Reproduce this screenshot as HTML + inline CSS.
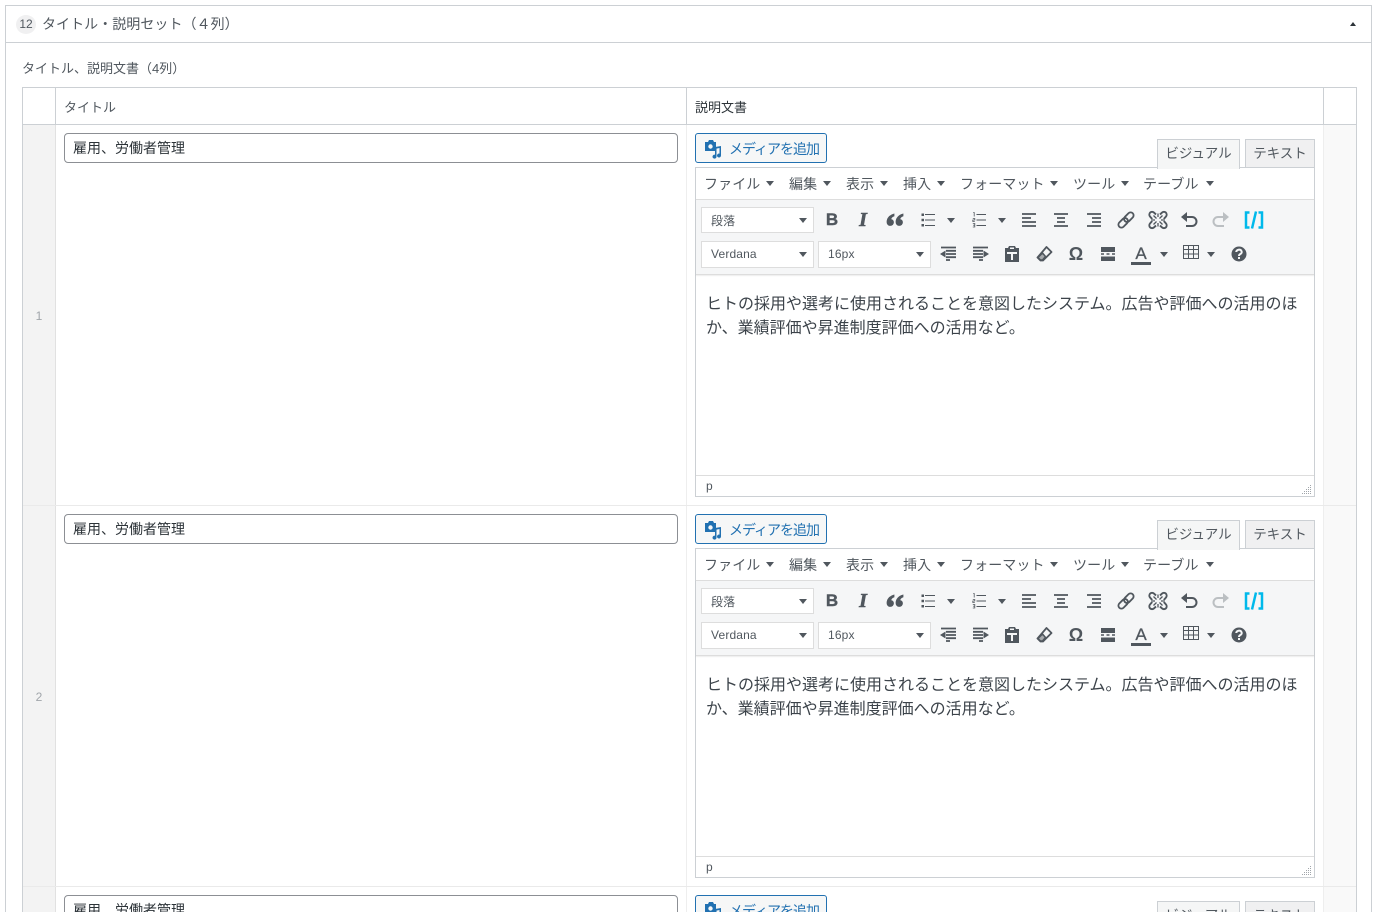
<!DOCTYPE html>
<html lang="ja"><head><meta charset="utf-8"><title>タイトル・説明セット</title>
<style>
html,body{margin:0;padding:0;width:1377px;height:912px;overflow:hidden;background:#fff}
body{font-family:"Liberation Sans","Noto Sans CJK JP",sans-serif;color:#3c434a;font-size:13px;position:relative}
div,span,svg{position:absolute;box-sizing:border-box}
.t{white-space:nowrap;line-height:20px}
.ed{left:0;width:1377px;height:381px}
.in{left:64px;top:133px;width:614px;height:30px;border:1px solid #8c8f94;border-radius:4px;background:#fff;padding-left:8px;font-size:14px;line-height:28px;color:#2c3338;white-space:nowrap}
.btn{left:695px;top:133px;width:132px;height:30px;border:1px solid #2271b1;border-radius:3px;background:#f6f7f7}
.mt{left:729px;top:139px;font-size:14px;letter-spacing:-1px;color:#2271b1}
.tab{top:139px;height:29px;border:1px solid #ccd0d4;font-size:13.500px;line-height:27px;text-align:center;color:#50575e;white-space:nowrap}
.box{left:695px;top:167px;width:620px;height:330px;border:1px solid #ccd0d4;background:#fff}
.m{top:174px;margin-left:-1px;font-size:14px;letter-spacing:.1px;color:#50575e}
.s{width:113px;height:26px;background:#fff;border:1px solid #ddd;font-size:12px;line-height:26px;padding-left:9px;color:#50575e;white-space:nowrap;letter-spacing:.15px}
.s2{height:27px;top:241px;line-height:25px}
.a{width:0;height:0;border-left:4px solid transparent;border-right:4px solid transparent;border-top:5px solid #50575e}
.ma{width:0;height:0;border-left:4px solid transparent;border-right:4px solid transparent;border-top:5px solid #50575e;top:181px}
.i{width:20px;height:20px;overflow:visible}
.g{font-size:16px;text-align:center;width:20px;color:#50575e;line-height:20px;white-space:nowrap}
.b{left:822px;top:210px;font-weight:bold;font-size:17px;-webkit-text-stroke:.4px #50575e}
.it{left:853px;top:210px;font-family:"Liberation Serif",serif;font-style:italic;font-weight:bold;font-size:20px;-webkit-text-stroke:.6px #50575e}
.om{left:1066px;top:244px;font-size:18px;font-weight:bold}
.ta{left:1131px;top:244px;font-size:17px;-webkit-text-stroke:.3px #50575e}
.c{left:706px;margin-top:2px;font-size:16px;line-height:24px;color:#3c434a;white-space:nowrap}
</style></head><body>
<svg width="0" height="0" style="left:0;top:0">
<defs>
<symbol id="media" viewBox="0 0 20 20"><path fill="#2271b1" d="M2 3h3l1-2h4l1 2h2v9H2z"/><circle cx="7.500" cy="7.500" r="2.200" fill="#f6f7f7"/><path fill="#2271b1" d="M18 7v9.500a2 2 0 1 1-1.500-1.900V9l-3 .6v8a2 2 0 1 1-1.500-1.900V8z"/></symbol>
<symbol id="quote" viewBox="0 0 20 20"><path fill="#50575e" stroke="#50575e" stroke-width=".8" d="M9 4C5 5 2 8 2 12c0 2 1.200 3.500 3.200 3.500S8.500 14 8.500 12.300 7.300 9.500 5.800 9.500C6 7.800 7.500 6.500 9 6zM18 4c-4 1-7 4-7 8 0 2 1.200 3.500 3.200 3.500s3.300-1.500 3.300-3.200-1.200-2.800-2.700-2.800c.2-1.700 1.700-3 3.200-3.500z"/></symbol>
<symbol id="ul" viewBox="0 0 20 20"><path stroke="#50575e" stroke-width="1" d="M7 4.500h10M7 10h10M7 15.500h10"/><path fill="#50575e" d="M3.500 3.500h2.500v2.500H3.500zM3.500 8.800h2.500v2.500H3.500zM3.500 14h2.500v2.500H3.500z"/></symbol>
<symbol id="ol" viewBox="0 0 20 20"><path stroke="#50575e" stroke-width="1" d="M7.500 4.500h9.500M7.500 10h9.500M7.500 15.500h9.500"/><path stroke="#50575e" stroke-width=".8" fill="none" d="M4.200 2.500h1v4M3.800 8.500h2v1.500h-2v1.500h2M3.800 13.500h2v3.500h-2M4.200 15.200h1.600"/></symbol>
<symbol id="al" viewBox="0 0 20 20"><path stroke="#50575e" stroke-width="1.700" d="M3 4h14M3 8h9M3 12h14M3 16h14"/></symbol>
<symbol id="ac" viewBox="0 0 20 20"><path stroke="#50575e" stroke-width="1.700" d="M3 4h14M6 8h8M6 12h8M3 16h14"/></symbol>
<symbol id="ar" viewBox="0 0 20 20"><path stroke="#50575e" stroke-width="1.700" d="M3 4h14M8 8h9M8 12h9M3 16h14"/></symbol>
<symbol id="link" viewBox="0 0 20 20"><g fill="none" stroke="#50575e" stroke-width="1.800" transform="rotate(-45 10 10)"><rect x=".5" y="7" width="11" height="6" rx="3"/><rect x="8.500" y="7" width="11" height="6" rx="3"/></g></symbol>
<symbol id="unlink" viewBox="0 0 20 20"><g fill="none" stroke="#50575e" stroke-width="1.900"><path d="M8 4.500 6 2.600a3 3 0 0 0-3.900 0 3 3 0 0 0 0 4L4.200 9"/><path d="M12 15.500l2 1.900a3 3 0 0 0 3.900 0 3 3 0 0 0 0-4L15.800 11"/><path d="M12 4.500l2-1.900a3 3 0 0 1 3.900 0 3 3 0 0 1 0 4L15.800 9"/><path d="M8 15.500l-2 1.900a3 3 0 0 1-3.900 0 3 3 0 0 1 0-4L4.200 11"/></g><path stroke="#50575e" stroke-width="1.300" d="M8.500 8.500 5.500 5.500M11.500 8.500l3-3M8.500 11.500l-3 3M11.500 11.500l3 3M7 10H3.500M13 10h3.500M10 7V3.500M10 13v3.500"/></symbol>
<symbol id="undo" viewBox="0 0 20 20"><path fill="none" stroke="#50575e" stroke-width="2" d="M4 7h9a4 4 0 0 1 0 9H7"/><path fill="#50575e" d="M8 2v10L2 7z"/></symbol>
<symbol id="redo" viewBox="0 0 20 20"><path fill="none" stroke="#bbbfc2" stroke-width="2" d="M16 7H7a4 4 0 0 0 0 9h6"/><path fill="#bbbfc2" d="M12 2v10l6-5z"/></symbol>
<symbol id="sc" viewBox="0 0 20 20"><path fill="none" stroke="#00b9eb" stroke-width="2.500" d="M5.500 2.500H2v15h3.500M14.500 2.500H18v15h-3.500M12 1.500 8 18.500"/></symbol>
<symbol id="out" viewBox="0 0 20 20"><path stroke="#50575e" stroke-width="1.800" d="M3 3.500h15M8 6.800h10M8 10h10M8 13.200h10M8 16h4"/><path fill="#50575e" d="M7.500 6.500v7L2 10z"/></symbol>
<symbol id="ind" viewBox="0 0 20 20"><path stroke="#50575e" stroke-width="1.800" d="M2 3.500h15M2 6.800h10M2 10h10M2 13.200h10M8 16h4"/><path fill="#50575e" d="M12.500 6.500v7L18 10z"/></symbol>
<symbol id="paste" viewBox="0 0 20 20"><path fill="#50575e" fill-rule="evenodd" d="M3 4h3l1-2h6l1 2h3v14H3zM8 3.500v1.500h4V3.500zM5 8v2h4v6h2v-6h4V8z"/></symbol>
<symbol id="erase" viewBox="0 0 20 20"><path fill="#f5f6f7" stroke="#50575e" stroke-width="1.800" stroke-linejoin="round" d="M12.500 3 17.500 8 9 16.500H6.500L3.500 13.500z"/><path stroke="#50575e" stroke-width="1.500" fill="#a7aaad" d="M4 13.500 8.500 9l3 3.500-3 3.500H6.500z"/></symbol>
<symbol id="hr" viewBox="0 0 20 20"><path fill="#50575e" d="M3 3h14v5H3zM3 12.500h14v4.500H3z"/><path stroke="#50575e" stroke-width="1.500" d="M3 10h3M8.500 10h3M14 10h3"/></symbol>
<symbol id="tb" viewBox="0 0 20 20"><path fill="none" stroke="#50575e" d="M2.500 2.500h15v13h-15zM2.500 6.500h15M2.500 11h15M7.500 2.500v13M12.500 2.500v13"/></symbol>
<symbol id="help" viewBox="0 0 20 20"><circle cx="10" cy="10" r="7.500" fill="#50575e"/><path fill="none" stroke="#f5f6f7" stroke-width="2" d="M7.300 8a2.700 2.300 0 1 1 4 2c-1 .6-1.300 1-1.300 2"/><rect x="9" y="13" width="2" height="2" fill="#f5f6f7"/></symbol>
</defs></svg>

<!-- outer postbox -->
<div style="left:5px;top:5px;width:1367px;height:920px;border:1px solid #ccd0d4"></div>
<div style="left:6px;top:42px;width:1365px;height:1px;background:#ccd0d4"></div>
<div style="left:16px;top:15px;width:20px;height:19px;border-radius:50%;background:#f0f0f1;font-size:12px;line-height:19px;text-align:center;color:#50575e">12</div>
<div class="t" style="left:42px;top:14px;font-size:14px;letter-spacing:.05px;color:#50575e">タイトル・説明セット（４列）</div>
<div style="left:1350px;top:22px;width:0;height:0;border-left:3px solid transparent;border-right:3px solid transparent;border-bottom:4px solid #2c3338"></div>
<div class="t" style="left:22px;top:59px;font-size:13px;color:#50575e">タイトル、説明文書（4列）</div>

<!-- table frame -->
<div style="left:22px;top:87px;width:1335px;height:840px;border:1px solid #ccd0d4;border-bottom:0"></div>
<div style="left:23px;top:124px;width:1333px;height:1px;background:#ccd0d4"></div>
<div style="left:55px;top:88px;width:1px;height:36px;background:#ccd0d4"></div>
<div style="left:686px;top:88px;width:1px;height:36px;background:#ccd0d4"></div>
<div style="left:1323px;top:88px;width:1px;height:36px;background:#ccd0d4"></div>
<div style="left:23px;top:125px;width:32px;height:787px;background:#f3f3f3"></div>
<div style="left:55px;top:125px;width:1px;height:787px;background:#e1e1e1"></div>
<div style="left:686px;top:125px;width:1px;height:787px;background:#eee"></div>
<div style="left:1324px;top:125px;width:32px;height:787px;background:#f9f9f9"></div>
<div style="left:1323px;top:125px;width:1px;height:787px;background:#eee"></div>
<div style="left:23px;top:505px;width:1333px;height:1px;background:#eaeaea"></div>
<div style="left:23px;top:886px;width:1333px;height:1px;background:#eaeaea"></div>
<div class="t" style="left:64px;top:97px;font-size:13px;line-height:22px;color:#50575e">タイトル</div>
<div class="t" style="left:695px;top:98px;font-size:13px;color:#2c3338">説明文書</div>
<div class="t" style="left:23px;top:306px;width:32px;text-align:center;font-size:12px;color:#a0a5aa">1</div>
<div class="t" style="left:23px;top:687px;width:32px;text-align:center;font-size:12px;color:#a0a5aa">2</div>

<!-- ROW 1 -->
<div class="ed" style="top:0">
<div class="in">雇用、労働者管理</div>
<div class="btn"></div>
<svg class="i" style="left:703px;top:139px;width:20px;height:20px"><use href="#media"/></svg>
<div class="t mt">メディアを追加</div>
<div class="box"></div>
<div class="tab" style="left:1157px;width:83px;background:#f5f6f6;border-bottom:0;height:30px">ビジュアル</div>
<div class="tab" style="left:1245px;width:70px;background:#f0f0f1">テキスト</div>
<div class="t m" style="left:705px">ファイル</div><div class="ma" style="left:766px"></div>
<div class="t m" style="left:790px">編集</div><div class="ma" style="left:823px"></div>
<div class="t m" style="left:847px">表示</div><div class="ma" style="left:880px"></div>
<div class="t m" style="left:904px">挿入</div><div class="ma" style="left:937px"></div>
<div class="t m" style="left:961px">フォーマット</div><div class="ma" style="left:1050px"></div>
<div class="t m" style="left:1074px">ツール</div><div class="ma" style="left:1121px"></div>
<div class="t m" style="left:1144px">テーブル</div><div class="ma" style="left:1206px"></div>
<div style="left:696px;top:199px;width:618px;height:76px;background:#f5f6f7;border-top:1px solid #ddd;border-bottom:1px solid #ddd;box-shadow:0 1px 1px rgba(0,0,0,.08)"></div>
<div class="s" style="left:701px;top:207px">段落</div><div class="a" style="left:799px;top:218px"></div>
<div class="s s2" style="left:701px">Verdana</div><div class="a" style="left:799px;top:252px"></div>
<div class="s s2" style="left:818px">16px</div><div class="a" style="left:916px;top:252px"></div>
<div class="g b">B</div>
<div class="g it">I</div>
<svg class="i" style="left:885px;top:210px"><use href="#quote"/></svg>
<svg class="i" style="left:918px;top:210px"><use href="#ul"/></svg><div class="a" style="left:947px;top:218px"></div>
<svg class="i" style="left:969px;top:210px"><use href="#ol"/></svg><div class="a" style="left:998px;top:218px"></div>
<svg class="i" style="left:1019px;top:210px"><use href="#al"/></svg>
<svg class="i" style="left:1051px;top:210px"><use href="#ac"/></svg>
<svg class="i" style="left:1084px;top:210px"><use href="#ar"/></svg>
<svg class="i" style="left:1116px;top:210px"><use href="#link"/></svg>
<svg class="i" style="left:1148px;top:210px"><use href="#unlink"/></svg>
<svg class="i" style="left:1179px;top:210px"><use href="#undo"/></svg>
<svg class="i" style="left:1211px;top:210px"><use href="#redo"/></svg>
<svg class="i" style="left:1244px;top:210px"><use href="#sc"/></svg>
<svg class="i" style="left:938px;top:244px"><use href="#out"/></svg>
<svg class="i" style="left:971px;top:244px"><use href="#ind"/></svg>
<svg class="i" style="left:1002px;top:244px"><use href="#paste"/></svg>
<svg class="i" style="left:1034px;top:244px"><use href="#erase"/></svg>
<div class="g om">Ω</div>
<svg class="i" style="left:1098px;top:244px"><use href="#hr"/></svg>
<div class="g ta">A</div><div style="left:1131px;top:262px;width:20px;height:3px;background:#50575e"></div><div class="a" style="left:1160px;top:252px"></div>
<svg class="i" style="left:1181px;top:243px"><use href="#tb"/></svg><div class="a" style="left:1207px;top:252px"></div>
<svg class="i" style="left:1229px;top:244px"><use href="#help"/></svg>
<div class="c" style="top:291px">ヒトの採用や選考に使用されることを意図したシステム。広告や評価への活用のほ</div>
<div class="c" style="top:315px">か、業績評価や昇進制度評価への活用など。</div>
<div style="left:696px;top:475px;width:618px;height:1px;background:#ddd"></div>
<div class="t" style="left:706px;top:476px;font-size:12px;color:#50575e">p</div>
<svg style="left:1302px;top:484px;width:10px;height:10px"><path stroke="#a0a5aa" stroke-dasharray="1 1" d="M8.500 1v9M6.500 3v7M4.500 5v5M2.500 7v3M.5 9v1"/></svg>
</div>

<!-- ROW 2 -->
<div class="ed" style="top:381px">
<div class="in">雇用、労働者管理</div>
<div class="btn"></div>
<svg class="i" style="left:703px;top:139px;width:20px;height:20px"><use href="#media"/></svg>
<div class="t mt">メディアを追加</div>
<div class="box"></div>
<div class="tab" style="left:1157px;width:83px;background:#f5f6f6;border-bottom:0;height:30px">ビジュアル</div>
<div class="tab" style="left:1245px;width:70px;background:#f0f0f1">テキスト</div>
<div class="t m" style="left:705px">ファイル</div><div class="ma" style="left:766px"></div>
<div class="t m" style="left:790px">編集</div><div class="ma" style="left:823px"></div>
<div class="t m" style="left:847px">表示</div><div class="ma" style="left:880px"></div>
<div class="t m" style="left:904px">挿入</div><div class="ma" style="left:937px"></div>
<div class="t m" style="left:961px">フォーマット</div><div class="ma" style="left:1050px"></div>
<div class="t m" style="left:1074px">ツール</div><div class="ma" style="left:1121px"></div>
<div class="t m" style="left:1144px">テーブル</div><div class="ma" style="left:1206px"></div>
<div style="left:696px;top:199px;width:618px;height:76px;background:#f5f6f7;border-top:1px solid #ddd;border-bottom:1px solid #ddd;box-shadow:0 1px 1px rgba(0,0,0,.08)"></div>
<div class="s" style="left:701px;top:207px">段落</div><div class="a" style="left:799px;top:218px"></div>
<div class="s s2" style="left:701px">Verdana</div><div class="a" style="left:799px;top:252px"></div>
<div class="s s2" style="left:818px">16px</div><div class="a" style="left:916px;top:252px"></div>
<div class="g b">B</div>
<div class="g it">I</div>
<svg class="i" style="left:885px;top:210px"><use href="#quote"/></svg>
<svg class="i" style="left:918px;top:210px"><use href="#ul"/></svg><div class="a" style="left:947px;top:218px"></div>
<svg class="i" style="left:969px;top:210px"><use href="#ol"/></svg><div class="a" style="left:998px;top:218px"></div>
<svg class="i" style="left:1019px;top:210px"><use href="#al"/></svg>
<svg class="i" style="left:1051px;top:210px"><use href="#ac"/></svg>
<svg class="i" style="left:1084px;top:210px"><use href="#ar"/></svg>
<svg class="i" style="left:1116px;top:210px"><use href="#link"/></svg>
<svg class="i" style="left:1148px;top:210px"><use href="#unlink"/></svg>
<svg class="i" style="left:1179px;top:210px"><use href="#undo"/></svg>
<svg class="i" style="left:1211px;top:210px"><use href="#redo"/></svg>
<svg class="i" style="left:1244px;top:210px"><use href="#sc"/></svg>
<svg class="i" style="left:938px;top:244px"><use href="#out"/></svg>
<svg class="i" style="left:971px;top:244px"><use href="#ind"/></svg>
<svg class="i" style="left:1002px;top:244px"><use href="#paste"/></svg>
<svg class="i" style="left:1034px;top:244px"><use href="#erase"/></svg>
<div class="g om">Ω</div>
<svg class="i" style="left:1098px;top:244px"><use href="#hr"/></svg>
<div class="g ta">A</div><div style="left:1131px;top:262px;width:20px;height:3px;background:#50575e"></div><div class="a" style="left:1160px;top:252px"></div>
<svg class="i" style="left:1181px;top:243px"><use href="#tb"/></svg><div class="a" style="left:1207px;top:252px"></div>
<svg class="i" style="left:1229px;top:244px"><use href="#help"/></svg>
<div class="c" style="top:291px">ヒトの採用や選考に使用されることを意図したシステム。広告や評価への活用のほ</div>
<div class="c" style="top:315px">か、業績評価や昇進制度評価への活用など。</div>
<div style="left:696px;top:475px;width:618px;height:1px;background:#ddd"></div>
<div class="t" style="left:706px;top:476px;font-size:12px;color:#50575e">p</div>
<svg style="left:1302px;top:484px;width:10px;height:10px"><path stroke="#a0a5aa" stroke-dasharray="1 1" d="M8.500 1v9M6.500 3v7M4.500 5v5M2.500 7v3M.5 9v1"/></svg>
</div>

<!-- ROW 3 (clipped by viewport) -->
<div class="ed" style="top:762px;height:150px;overflow:hidden">
<div class="in">雇用、労働者管理</div>
<div class="btn"></div>
<svg class="i" style="left:703px;top:139px;width:20px;height:20px"><use href="#media"/></svg>
<div class="t mt">メディアを追加</div>
<div class="tab" style="left:1157px;width:83px;background:#f5f6f6;border-bottom:0;height:30px">ビジュアル</div>
<div class="tab" style="left:1245px;width:70px;background:#f0f0f1">テキスト</div>
</div>
</body></html>
